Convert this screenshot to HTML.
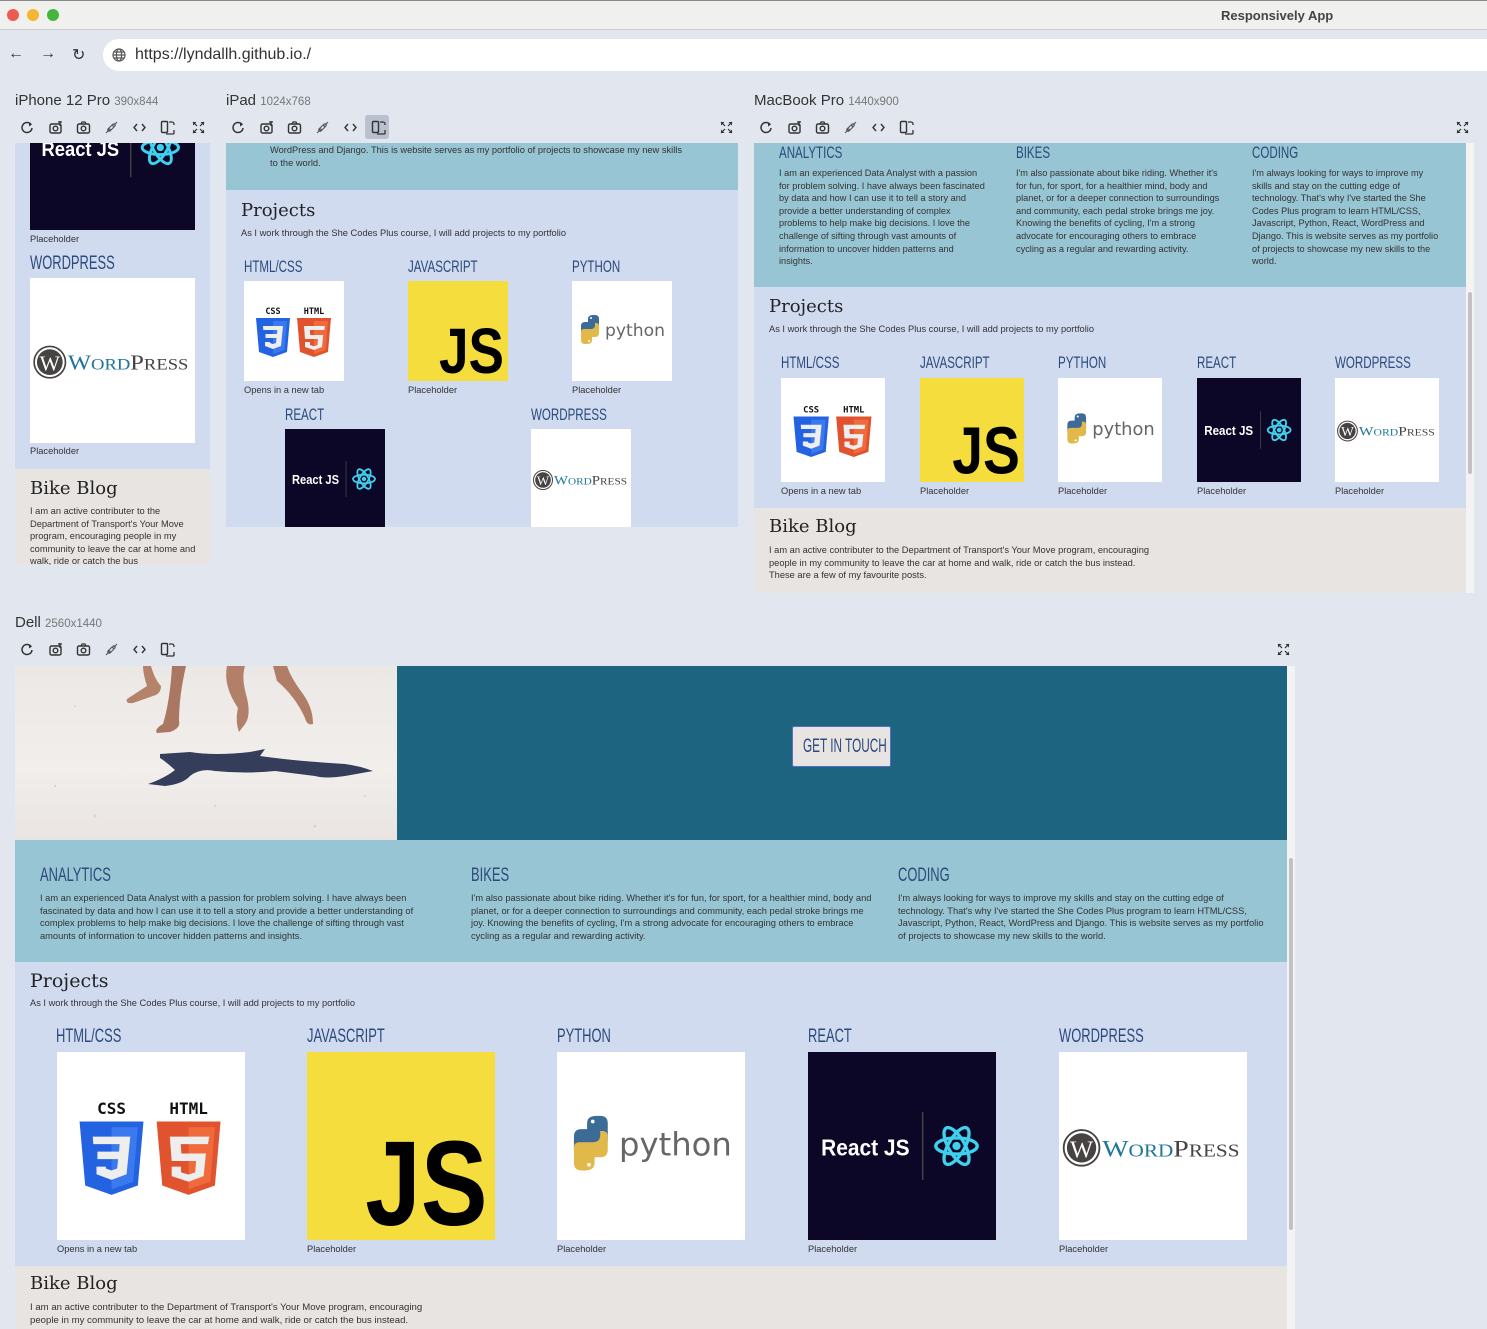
<!DOCTYPE html>
<html><head><meta charset="utf-8">
<style>
*{box-sizing:border-box;margin:0;padding:0}
body{width:1487px;height:1329px;overflow:hidden;background:#e1e6ef;font-family:"Liberation Sans",sans-serif;position:relative}
.a{position:absolute}
.h{position:absolute;color:#2c4a7c;white-space:nowrap;transform:scaleX(.68);transform-origin:left top;font-family:"Liberation Sans",sans-serif}
.t{position:absolute;color:#333;white-space:nowrap}
.sf{position:absolute;font-family:"DejaVu Serif","Liberation Serif",serif;color:#222;white-space:nowrap}
.lbl{position:absolute;font-size:15px;color:#333;white-space:nowrap}
.lbl small{font-size:11.5px;color:#777}
.clip{position:absolute;overflow:hidden}
</style></head><body>
<div class="a" style="left:0;top:0;width:1487px;height:30px;background:#f0f0ee;border-bottom:1px solid #c9c9c9;border-top:1px solid #888"></div>
<div class="a" style="left:7px;top:9px;width:12px;height:12px;border-radius:50%;background:#ee5a52"></div>
<div class="a" style="left:27px;top:9px;width:12px;height:12px;border-radius:50%;background:#f4b530"></div>
<div class="a" style="left:47px;top:9px;width:12px;height:12px;border-radius:50%;background:#43b63b"></div>
<div class="t" style="left:1221px;top:8px;font-size:13px;font-weight:bold;color:#444">Responsively App</div>
<div class="t" style="left:8px;top:45px;font-size:16px;color:#333">&#8592;</div>
<div class="t" style="left:40px;top:45px;font-size:16px;color:#333">&#8594;</div>
<div class="t" style="left:72px;top:45px;font-size:16px;color:#333">&#8635;</div>
<div class="a" style="left:103px;top:39px;width:1400px;height:32px;background:#fff;border-radius:16px"></div>
<svg class="a" style="left:112px;top:48px" width="14" height="14" viewBox="0 0 14 14" fill="none" stroke="#555" stroke-width="1.2"><circle cx="7" cy="7" r="6"/><ellipse cx="7" cy="7" rx="2.6" ry="6"/><path d="M1 7h12M2 4h10M2 10h10"/></svg>
<div class="t" style="left:135px;top:46px;font-size:16px;color:#333">https://lyndallh.github.io./</div>

<div class="lbl" style="left:15px;top:92px">iPhone 12 Pro <small>390x844</small></div>
<div class="lbl" style="left:226px;top:92px">iPad <small>1024x768</small></div>
<div class="lbl" style="left:754px;top:92px">MacBook Pro <small>1440x900</small></div>
<div class="lbl" style="left:15px;top:614px">Dell <small>2560x1440</small></div>
<div id="tbs"></div>

<div class="clip" style="left:15px;top:143px;width:195px;height:422px;background:#d0dbf0">
  <div id="ip1" class="a" style="left:15px;top:-78px"></div>
  <div class="t" style="left:15px;top:91px;font-size:9.3px">Placeholder</div>
  <div class="h" style="left:15px;top:110px;font-size:19px">WORDPRESS</div>
  <div id="ip2" class="a" style="left:15px;top:135px"></div>
  <div class="t" style="left:15px;top:303px;font-size:9.3px">Placeholder</div>
  <div class="a" style="left:0;top:326px;width:195px;height:100px;background:#e8e4e1"></div>
  <div class="sf" style="left:15px;top:335px;font-size:18px">Bike Blog</div>
  <div class="t" style="left:15px;top:362px;font-size:9.3px;line-height:12.5px;white-space:normal;width:168px">I am an active contributer to the Department of Transport's Your Move program, encouraging people in my community to leave the car at home and walk, ride or catch the bus</div>
</div>

<div class="clip" style="left:226px;top:143px;width:512px;height:384px;background:#d0dbf0">
  <div class="a" style="left:0;top:0;width:512px;height:47px;background:#97c5d3"></div>
  <div class="t" style="left:44px;top:1px;font-size:9.3px;line-height:12.5px">WordPress and Django. This is website serves as my portfolio of projects to showcase my new skills<br>to the world.</div>
  <div class="sf" style="left:15px;top:57px;font-size:18px">Projects</div>
  <div class="t" style="left:15px;top:85px;font-size:9.3px">As I work through the She Codes Plus course, I will add projects to my portfolio</div>
  <div class="h" style="left:18px;top:114px;font-size:17px">HTML/CSS</div>
  <div class="h" style="left:182px;top:114px;font-size:17px">JAVASCRIPT</div>
  <div class="h" style="left:346px;top:114px;font-size:17px">PYTHON</div>
  <div id="pd1" class="a" style="left:18px;top:138px"></div>
  <div id="pd2" class="a" style="left:182px;top:138px"></div>
  <div id="pd3" class="a" style="left:346px;top:138px"></div>
  <div class="t" style="left:18px;top:242px;font-size:9.3px">Opens in a new tab</div>
  <div class="t" style="left:182px;top:242px;font-size:9.3px">Placeholder</div>
  <div class="t" style="left:346px;top:242px;font-size:9.3px">Placeholder</div>
  <div class="h" style="left:59px;top:262px;font-size:17px">REACT</div>
  <div class="h" style="left:305px;top:262px;font-size:17px">WORDPRESS</div>
  <div id="pd4" class="a" style="left:59px;top:286px"></div>
  <div id="pd5" class="a" style="left:305px;top:286px"></div>
</div>

<div class="clip" style="left:754px;top:143px;width:712px;height:450px;background:#d0dbf0">
  <div class="a" style="left:0;top:0;width:712px;height:144px;background:#97c5d3"></div>
  <div class="h" style="left:25px;top:0px;font-size:17px">ANALYTICS</div>
  <div class="h" style="left:262px;top:0px;font-size:17px">BIKES</div>
  <div class="h" style="left:498px;top:0px;font-size:17px">CODING</div>
  <div class="t" style="left:25px;top:24px;font-size:9.2px;line-height:12.6px;white-space:normal;width:208px">I am an experienced Data Analyst with a passion for problem solving. I have always been fascinated by data and how I can use it to tell a story and provide a better understanding of complex problems to help make big decisions. I love the challenge of sifting through vast amounts of information to uncover hidden patterns and insights.</div>
  <div class="t" style="left:262px;top:24px;font-size:9.2px;line-height:12.6px;white-space:normal;width:208px">I'm also passionate about bike riding. Whether it's for fun, for sport, for a healthier mind, body and planet, or for a deeper connection to surroundings and community, each pedal stroke brings me joy. Knowing the benefits of cycling, I'm a strong advocate for encouraging others to embrace cycling as a regular and rewarding activity.</div>
  <div class="t" style="left:498px;top:24px;font-size:9.2px;line-height:12.6px;white-space:normal;width:190px">I'm always looking for ways to improve my skills and stay on the cutting edge of technology. That's why I've started the She Codes Plus program to learn HTML/CSS, Javascript, Python, React, WordPress and Django. This is website serves as my portfolio of projects to showcase my new skills to the world.</div>
  <div class="sf" style="left:15px;top:153px;font-size:18px">Projects</div>
  <div class="t" style="left:15px;top:181px;font-size:9.3px">As I work through the She Codes Plus course, I will add projects to my portfolio</div>
  <div class="h" style="left:27px;top:210px;font-size:17px">HTML/CSS</div>
  <div class="h" style="left:166px;top:210px;font-size:17px">JAVASCRIPT</div>
  <div class="h" style="left:304px;top:210px;font-size:17px">PYTHON</div>
  <div class="h" style="left:443px;top:210px;font-size:17px">REACT</div>
  <div class="h" style="left:581px;top:210px;font-size:17px">WORDPRESS</div>
  <div id="mb1" class="a" style="left:27px;top:235px"></div>
  <div id="mb2" class="a" style="left:166px;top:235px"></div>
  <div id="mb3" class="a" style="left:304px;top:235px"></div>
  <div id="mb4" class="a" style="left:443px;top:235px"></div>
  <div id="mb5" class="a" style="left:581px;top:235px"></div>
  <div class="t" style="left:27px;top:343px;font-size:9.3px">Opens in a new tab</div>
  <div class="t" style="left:166px;top:343px;font-size:9.3px">Placeholder</div>
  <div class="t" style="left:304px;top:343px;font-size:9.3px">Placeholder</div>
  <div class="t" style="left:443px;top:343px;font-size:9.3px">Placeholder</div>
  <div class="t" style="left:581px;top:343px;font-size:9.3px">Placeholder</div>
  <div class="a" style="left:0;top:365px;width:712px;height:90px;background:#e8e4e1"></div>
  <div class="sf" style="left:15px;top:373px;font-size:18px">Bike Blog</div>
  <div class="t" style="left:15px;top:401px;font-size:9.3px;line-height:12.6px">I am an active contributer to the Department of Transport's Your Move program, encouraging<br>people in my community to leave the car at home and walk, ride or catch the bus instead.<br>These are a few of my favourite posts.</div>
</div>
<div class="a" style="left:1466px;top:143px;width:8px;height:450px;background:#f3f3f3"></div>
<div class="a" style="left:1468px;top:292px;width:4px;height:182px;background:#c2c2c2;border-radius:2px"></div>

<div class="clip" style="left:15px;top:666px;width:1272px;height:663px;background:#d0dbf0">
  <div class="a" style="left:0;top:0;width:382px;height:174px;background:linear-gradient(180deg,#ece8e6,#f1eeec 60%,#e9e4e2)"></div>
  <svg class="a" style="left:0;top:0" width="382" height="174" viewBox="0 0 382 174">
    <path d="M128 0 L136 0 Q140 14 146 20 Q146 28 138 30 L118 37 Q110 38 112 33 L132 20 Q128 8 128 0Z" fill="#b5826a"/>
    <path d="M157 0 L171 0 Q164 30 164 55 Q166 62 155 66 L142 67 Q139 63 148 58 Q155 35 157 0Z" fill="#a97762"/>
    <path d="M212 0 L230 0 Q226 12 232 32 Q236 50 230 58 L224 66 Q220 55 223 42 Q208 20 212 0Z" fill="#b28068"/>
    <path d="M258 0 L272 0 Q276 12 288 28 Q298 42 298 58 Q292 60 290 52 Q280 30 262 15Z" fill="#b07e67"/>
    <path d="M145 88 L175 86 Q200 90 235 86 L250 83 L245 90 Q280 95 330 98 Q345 100 358 105 L330 110 Q310 113 300 110 L260 105 Q230 108 200 105 Q185 102 175 110 Q168 118 150 120 L133 118 Q150 112 160 104 Q150 95 145 92Z" fill="#343d59"/>
    <g fill="#c9bfb8" opacity=".5"><circle cx="40" cy="120" r="1.2"/><circle cx="80" cy="150" r="1.5"/><circle cx="200" cy="140" r="1.2"/><circle cx="300" cy="160" r="1.4"/><circle cx="60" cy="40" r="1"/><circle cx="350" cy="130" r="1.2"/></g>
  </svg>
  <div class="a" style="left:382px;top:0;width:890px;height:174px;background:#1d6480"></div>
  <div class="a" style="left:777px;top:60px;width:99px;height:41px;background:#e8e4e1;border:1px solid #5570c0;border-radius:2px"></div>
  <div class="h" style="left:788px;top:70px;font-size:19px;transform:scaleX(.62)">GET IN TOUCH</div>
  <div class="a" style="left:0;top:174px;width:1272px;height:122px;background:#97c5d3"></div>
  <div class="h" style="left:25px;top:199px;font-size:19px">ANALYTICS</div>
  <div class="h" style="left:456px;top:199px;font-size:19px">BIKES</div>
  <div class="h" style="left:883px;top:199px;font-size:19px">CODING</div>
  <div class="t" style="left:25px;top:226px;font-size:9.3px;line-height:12.6px;white-space:normal;width:400px">I am an experienced Data Analyst with a passion for problem solving. I have always been fascinated by data and how I can use it to tell a story and provide a better understanding of complex problems to help make big decisions. I love the challenge of sifting through vast amounts of information to uncover hidden patterns and insights.</div>
  <div class="t" style="left:456px;top:226px;font-size:9.3px;line-height:12.6px;white-space:normal;width:405px">I'm also passionate about bike riding. Whether it's for fun, for sport, for a healthier mind, body and planet, or for a deeper connection to surroundings and community, each pedal stroke brings me joy. Knowing the benefits of cycling, I'm a strong advocate for encouraging others to embrace cycling as a regular and rewarding activity.</div>
  <div class="t" style="left:883px;top:226px;font-size:9.3px;line-height:12.6px;white-space:normal;width:370px">I'm always looking for ways to improve my skills and stay on the cutting edge of technology. That's why I've started the She Codes Plus program to learn HTML/CSS, Javascript, Python, React, WordPress and Django. This is website serves as my portfolio of projects to showcase my new skills to the world.</div>
  <div class="sf" style="left:15px;top:304px;font-size:19px">Projects</div>
  <div class="t" style="left:15px;top:332px;font-size:9.3px">As I work through the She Codes Plus course, I will add projects to my portfolio</div>
  <div class="h" style="left:41px;top:360px;font-size:19px">HTML/CSS</div>
  <div class="h" style="left:292px;top:360px;font-size:19px">JAVASCRIPT</div>
  <div class="h" style="left:542px;top:360px;font-size:19px">PYTHON</div>
  <div class="h" style="left:793px;top:360px;font-size:19px">REACT</div>
  <div class="h" style="left:1044px;top:360px;font-size:19px">WORDPRESS</div>
  <div id="d1" class="a" style="left:42px;top:386px"></div>
  <div id="d2" class="a" style="left:292px;top:386px"></div>
  <div id="d3" class="a" style="left:542px;top:386px"></div>
  <div id="d4" class="a" style="left:793px;top:386px"></div>
  <div id="d5" class="a" style="left:1044px;top:386px"></div>
  <div class="t" style="left:42px;top:578px;font-size:9.3px">Opens in a new tab</div>
  <div class="t" style="left:292px;top:578px;font-size:9.3px">Placeholder</div>
  <div class="t" style="left:542px;top:578px;font-size:9.3px">Placeholder</div>
  <div class="t" style="left:793px;top:578px;font-size:9.3px">Placeholder</div>
  <div class="t" style="left:1044px;top:578px;font-size:9.3px">Placeholder</div>
  <div class="a" style="left:0;top:600px;width:1272px;height:63px;background:#e8e4e1"></div>
  <div class="sf" style="left:15px;top:607px;font-size:18px">Bike Blog</div>
  <div class="t" style="left:15px;top:636px;font-size:9.6px;line-height:12.6px">I am an active contributer to the Department of Transport's Your Move program, encouraging<br>people in my community to leave the car at home and walk, ride or catch the bus instead.</div>
</div>
<div class="a" style="left:1287px;top:666px;width:8px;height:663px;background:#f3f3f3"></div>
<div class="a" style="left:1289px;top:858px;width:4px;height:372px;background:#c2c2c2;border-radius:2px"></div>

<script>
function logo(t,s){
  var v='<svg width="'+s+'" height="'+s+'" viewBox="0 0 100 100" style="display:block">';
  if(t==1){v+='<rect width="100" height="100" fill="#fff"/>'+
   '<text x="29" y="33" font-family="DejaVu Sans Mono,monospace" font-weight="bold" font-size="8.5" text-anchor="middle" fill="#111">CSS</text>'+
   '<text x="70" y="33" font-family="DejaVu Sans Mono,monospace" font-weight="bold" font-size="8.5" text-anchor="middle" fill="#111">HTML</text>'+
   '<path d="M12 37h34l-3 34-14 5-14-5z" fill="#2362e0"/><path d="M29 40h14l-2.5 29-11.5 4z" fill="#3b79ee"/>'+
   '<path d="M19 45h20l-2 20-8 3-8-3v-4h5v1l3 1 3-1 .5-5h-11v-4h11.5l.3-4h-14z" fill="#eee"/>'+
   '<path d="M53 37h34l-3 34-14 5-14-5z" fill="#e1522e"/><path d="M70 40h14l-2.5 29-11.5 4z" fill="#ef6b3b"/>'+
   '<path d="M81 45h-21l1 13h13l-.5 6-3.5 1.2-4-1.2v-3h-5v5l9 3 8-3 1.2-12h-13l-.4-5h14.5z" fill="#eee"/>';}
  else if(t==2){v+='<rect width="100" height="100" fill="#f4dd3c"/><text x="31" y="92" font-family="Liberation Sans,sans-serif" font-weight="bold" font-size="64" fill="#000" textLength="65" lengthAdjust="spacingAndGlyphs">JS</text>';}
  else if(t==3){v+='<rect width="100" height="100" fill="#fff"/>'+
   '<path d="M9 45q0-4 4-4h3v-3q0-4 5-4h2q4 0 4 4v9q0 3-3 3h-7q-4 0-4 4v1h-1q-3 0-3-3z" fill="#3d6b98"/>'+
   '<path d="M27 52q0 4-4 4h-3v3q0 4-5 4h-2q-4 0-4-4v-8q0-3 3-3h7q4 0 4-4v-2h1q3 0 3 3z" fill="#e1b94a"/>'+
   '<circle cx="19" cy="37" r="1" fill="#fff"/><circle cx="17" cy="60" r="1" fill="#fff"/>'+
   '<text x="33" y="55" font-family="DejaVu Sans,sans-serif" font-size="17" fill="#666" textLength="60" lengthAdjust="spacingAndGlyphs">python</text>';}
  else if(t==4){v+='<rect width="100" height="100" fill="#0c0727"/>'+
   '<text x="7" y="55" font-family="Liberation Sans,sans-serif" font-weight="bold" font-size="12.5" fill="#fff" textLength="47" lengthAdjust="spacingAndGlyphs">React JS</text>'+
   '<line x1="61" y1="32" x2="61" y2="68" stroke="#444" stroke-width=".8"/>'+
   '<g fill="none" stroke="#3fd0ee" stroke-width="1.8"><ellipse cx="79" cy="50" rx="11" ry="4.3"/><ellipse cx="79" cy="50" rx="11" ry="4.3" transform="rotate(60 79 50)"/><ellipse cx="79" cy="50" rx="11" ry="4.3" transform="rotate(-60 79 50)"/></g><circle cx="79" cy="50" r="2.2" fill="#3fd0ee"/>';}
  else {v+='<rect width="100" height="100" fill="#fff"/>'+
   '<circle cx="12" cy="51" r="9.5" fill="#fff" stroke="#464342" stroke-width="1"/><circle cx="12" cy="51" r="7.8" fill="#464342"/>'+
   '<text x="12" y="56" text-anchor="middle" font-family="Liberation Serif,serif" font-size="13" fill="#fff">W</text>'+
   '<text x="23" y="55.5" font-family="Liberation Serif,serif" font-size="12.5" fill="#21759b" textLength="73" lengthAdjust="spacingAndGlyphs">W<tspan font-size="9.5">ORD</tspan><tspan fill="#464342" font-size="12.5">P</tspan><tspan fill="#464342" font-size="9.5">RESS</tspan></text>';}
  return v+'</svg>';
}
function put(id,t,s){document.getElementById(id).innerHTML=logo(t,s);}
put('ip1',4,165);put('ip2',5,165);
put('pd1',1,100);put('pd2',2,100);put('pd3',3,100);put('pd4',4,100);put('pd5',5,100);
for(var i=1;i<=5;i++){put('mb'+i,i,104);put('d'+i,i,188);}
var icons=[
 '<path d="M11 4.5A5 5 0 1 0 12 8" fill="none" stroke="#333" stroke-width="1.5"/><path d="M9 2l3 2.5-3 2z" fill="#333"/>',
 '<rect x="2" y="4" width="11" height="9" rx="1.5" fill="none" stroke="#333" stroke-width="1.4"/><circle cx="7.5" cy="8.5" r="2.3" fill="none" stroke="#333" stroke-width="1.4"/><path d="M12 1v5M10 2h4" stroke="#333" stroke-width="1.3"/>',
 '<rect x="1.5" y="4" width="12" height="9" rx="1.5" fill="none" stroke="#333" stroke-width="1.4"/><circle cx="7.5" cy="8.5" r="2.3" fill="none" stroke="#333" stroke-width="1.4"/><path d="M5 4l1-2h3l1 2" fill="none" stroke="#333" stroke-width="1.2"/>',
 '<path d="M2 13l3-3M10 5l3-3M4 9l2 2 4-4-2-2z" fill="none" stroke="#555" stroke-width="1.1"/><circle cx="5" cy="10" r="1.3" fill="none" stroke="#555"/><circle cx="10" cy="5" r="1.3" fill="none" stroke="#555"/>',
 '<path d="M5 4L2 7.5 5 11M10 4l3 3.5L10 11" fill="none" stroke="#333" stroke-width="1.4"/>',
 '<rect x="1.5" y="1.5" width="6" height="11" rx="1" fill="none" stroke="#333" stroke-width="1.4"/><path d="M9 2h3a2 2 0 0 1 2 2v1M14 10v3a1 1 0 0 1-1 1H6" fill="none" stroke="#333" stroke-width="1.3"/>'
];
var full='<path d="M2 2h3.5L2 5.5zM13 2H9.5L13 5.5zM2 13h3.5L2 9.5zM13 13H9.5L13 9.5z" fill="#333"/><path d="M2 2l4 4M13 2l-4 4M2 13l4-4M13 13l-4-4" stroke="#333" stroke-width="1.2"/>';
var h='';
function bar(x,y,fx,hi){for(var i=0;i<6;i++){var cx=x+i*28;
  if(hi===i)h+='<div class="a" style="left:'+(cx-6)+'px;top:'+(y-5)+'px;width:24px;height:24px;background:#b9c1cf;border-radius:3px"></div>';
  h+='<svg class="a" style="left:'+cx+'px;top:'+y+'px" width="15" height="15" viewBox="0 0 15 15">'+icons[i]+'</svg>';}
  if(fx)h+='<svg class="a" style="left:'+fx+'px;top:'+y+'px" width="15" height="15" viewBox="0 0 15 15">'+full+'</svg>';}
bar(20,120,191);bar(231,120,719,5);bar(759,120,1455);bar(20,642,1276);
document.getElementById('tbs').innerHTML=h;
</script>
</body></html>
